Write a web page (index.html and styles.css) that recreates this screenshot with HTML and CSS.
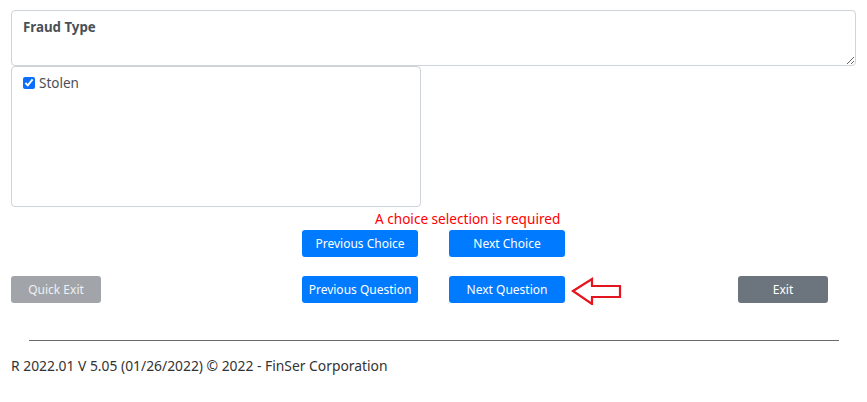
FILE: index.html
```html
<!DOCTYPE html>
<html lang="en">
<head>
<meta charset="utf-8">
<title>Fraud Type</title>
<link rel="stylesheet" href="styles.css">
</head>
<body>
<main class="page">
  <textarea class="question" readonly>Fraud Type</textarea>
  <div class="choices">
    <label class="choice"><input type="checkbox" checked> Stolen</label>
  </div>
  <div class="row msg-row">
    <div class="error">A choice selection is required</div>
  </div>
  <div class="row">
    <span></span>
    <div class="center-group">
      <button class="btn btn-primary">Previous Choice</button>
      <button class="btn btn-primary">Next Choice</button>
    </div>
    <span></span>
  </div>
  <div class="row row-q">
    <div class="left"><button class="btn btn-disabled">Quick Exit</button></div>
    <div class="center-group">
      <button class="btn btn-primary">Previous Question</button>
      <button class="btn btn-primary btn-next">Next Question
        <svg class="arrow" width="52" height="28" viewBox="0 0 52 28"><path d="M2 14 L21 2 L21 9 L49 9 L49 20 L21 20 L21 27 Z" fill="none" stroke="#e3151e" stroke-width="2.2" stroke-linejoin="miter"/></svg>
      </button>
    </div>
    <div class="right"><button class="btn btn-secondary">Exit</button></div>
  </div>
  <hr class="rule">
  <footer class="footer">R 2022.01 V 5.05 (01/26/2022) © 2022 - FinSer Corporation</footer>
</main>
</body>
</html>
```
FILE: styles.css
```css
html, body {
  margin: 0;
  background: #fff;
}
body {
  font-family: "Noto Sans", "Open Sans", Arial, sans-serif;
  color: #212529;
}
.page {
  padding: 10px 11px 0 11px;
}
.question {
  display: block;
  box-sizing: border-box;
  width: 845px;
  height: 56px;
  margin: 0;
  padding: 7px 11px;
  border: 1px solid #ced4da;
  border-radius: 4px;
  font-family: inherit;
  font-size: 13.3px;
  font-weight: 700;
  color: #495057;
  resize: vertical;
  outline: none;
}
.choices {
  box-sizing: border-box;
  width: 410px;
  height: 141px;
  border: 1px solid #ced4da;
  border-radius: 4px;
  padding: 7px 11px;
}
.choice {
  display: flex;
  align-items: center;
  gap: 4px;
  font-size: 13.5px;
  color: #495057;
}
.choice input {
  margin: 0;
  width: 12px;
  height: 12px;
  accent-color: #0d6efd;
}
.row {
  display: grid;
  grid-template-columns: 1fr auto 1fr;
  align-items: center;
  width: 845px;
}
.msg-row {
  display: block;
  height: 23px;
}
.error {
  width: 845px;
  box-sizing: border-box;
  padding-left: 364px;
  padding-top: 3px;
  font-size: 13.6px;
  color: #ff0000;
  line-height: 18px;
}
.row-q {
  margin-top: 19px;
}
.center-group {
  display: flex;
  gap: 31px;
}
.left { justify-self: start; }
.right { justify-self: end; margin-right: 28px; }
.btn {
  box-sizing: border-box;
  height: 27px;
  border: none;
  border-radius: 3px;
  padding: 0;
  width: 116px;
  font-family: inherit;
  font-size: 12px;
  color: #fff;
  line-height: 27px;
}
.btn-primary { background: #007bff; }
.btn-next { position: relative; }
.arrow {
  position: absolute;
  left: 122px;
  top: 1px;
}
.btn-disabled { background: #a1a5aa; width: 90px; color: #eef0f2; }
.btn-secondary { background: #6c757d; width: 90px; }
.rule {
  margin: 37px 17px 0 18px;
  border: none;
  border-top: 1px solid #6b6b6b;
  width: 810px;
}
.footer {
  margin-top: 15px;
  font-size: 13.85px;
  color: #333;
}
```
